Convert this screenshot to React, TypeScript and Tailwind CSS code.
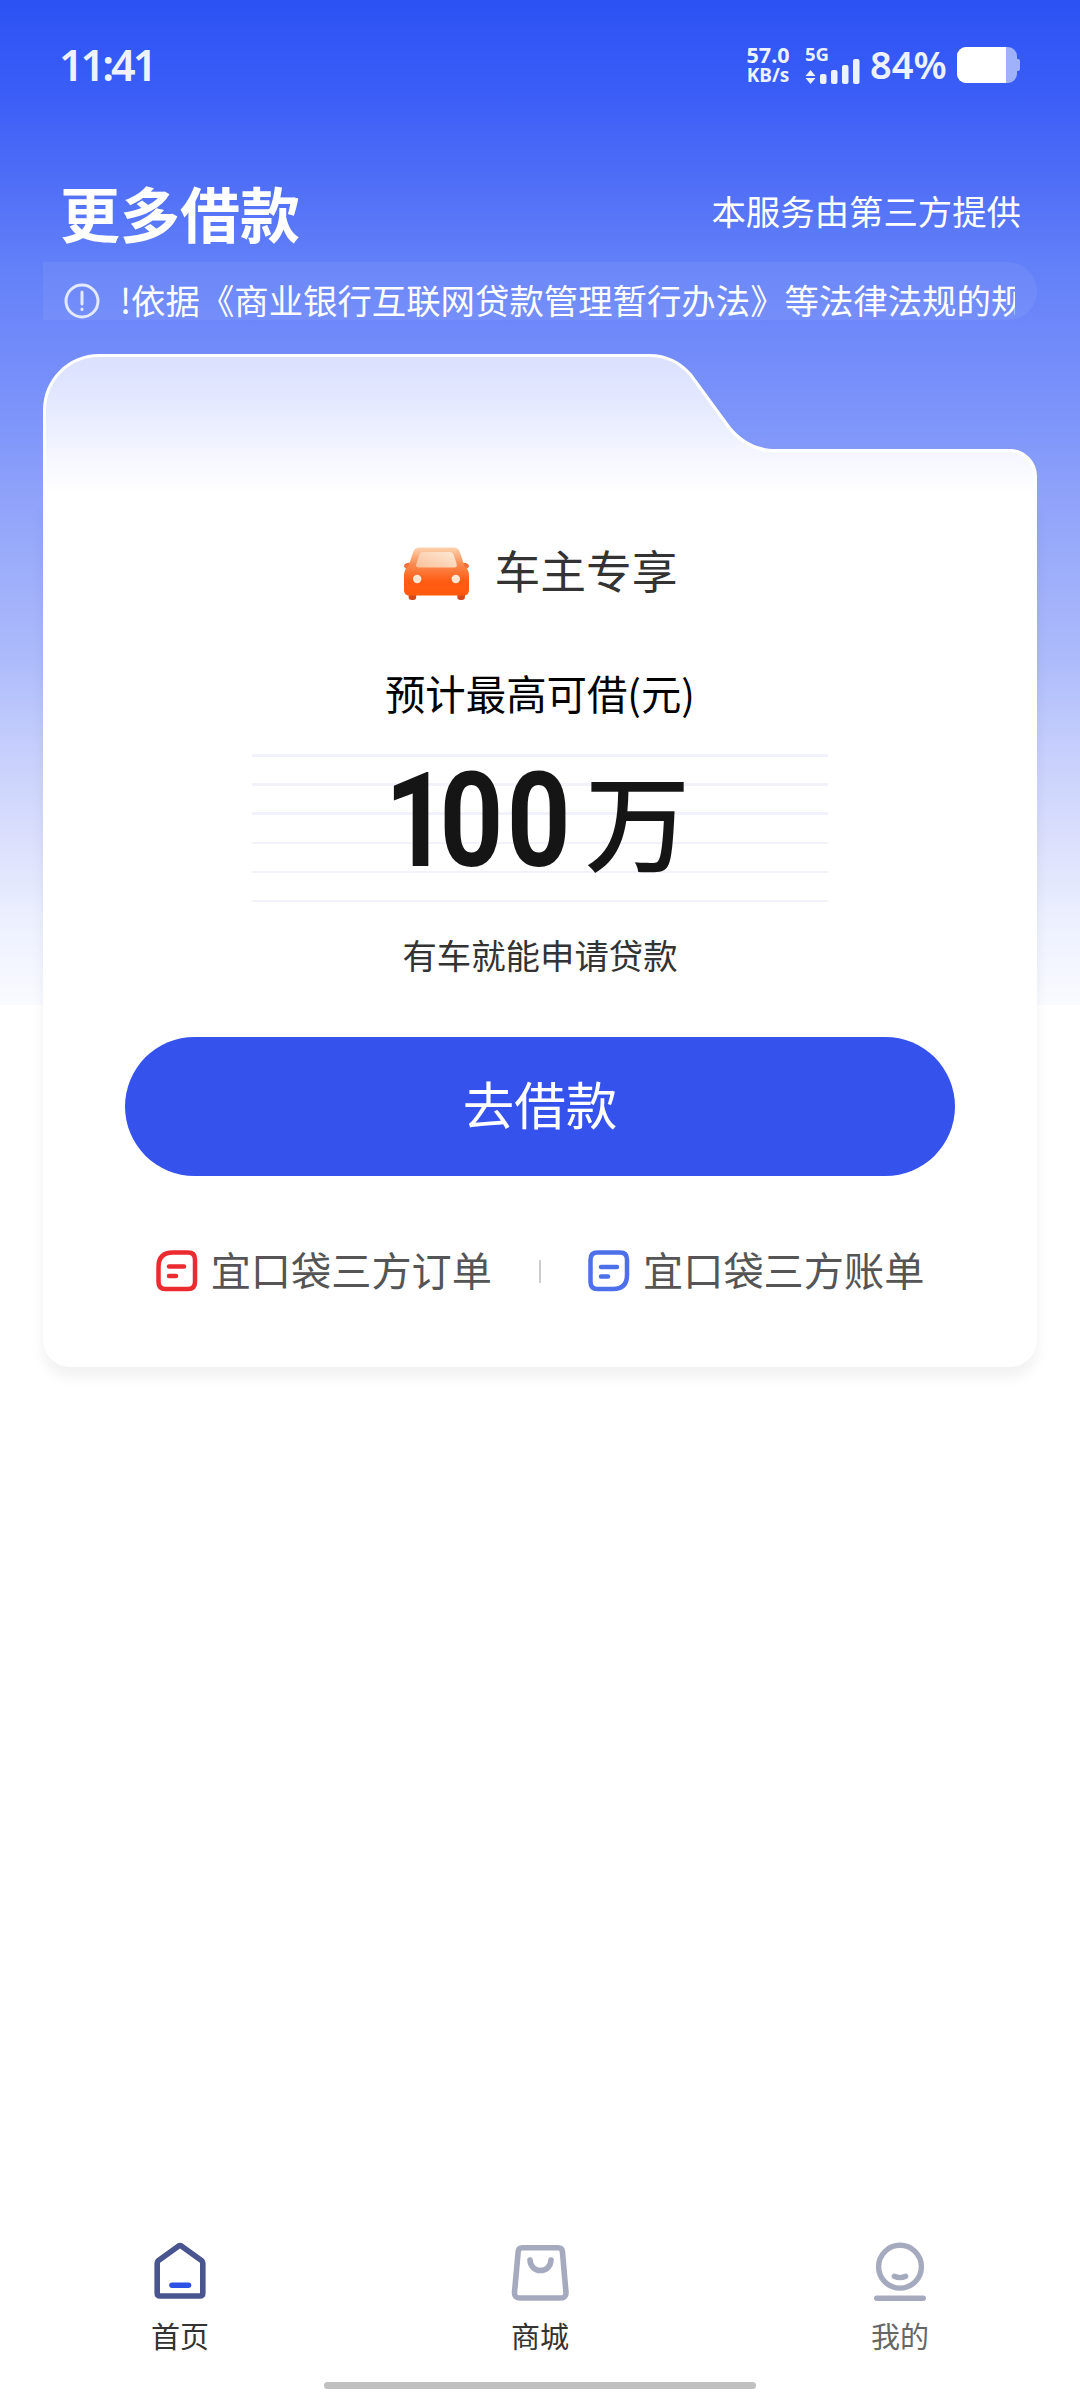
import type { ReactNode } from "react"

interface RecordLink {
  label: string
  icon: ReactNode
}

interface Tab {
  label: string
  icon: ReactNode
  className: string
}

function StatusBar() {
  return (
    <div className="flex h-[130px] items-center justify-between pl-[59px] pr-[60px] text-[#eef2ff]">
      <span className="mb-[2px] font-['Noto_Sans'] text-[43px] leading-none font-semibold tracking-[-3px]">11:41</span>
      <div className="flex items-center">
        <div className="mb-[1px] flex w-[46px] flex-col items-center gap-[1px] font-['Noto_Sans'] font-bold whitespace-nowrap">
          <span className="text-[21.5px] leading-[20px]">57.0</span>
          <span className="text-[19px] leading-[19px]">KB/s</span>
        </div>
        <div className="ml-[14px] flex w-[55px] flex-col">
          <span className="-mt-[3px] mb-[3px] font-['Noto_Sans'] text-[18.5px] leading-[19px] font-bold">5G</span>
          <svg viewBox="0 0 55 26" className="-mt-[8px] h-[26px] w-[55px]" fill="currentColor">
            <path d="M0.5 18 5.5 12l5 6zM0.5 20h10l-5 6z" />
            <rect x="15" y="16" width="6.5" height="10" rx="2" />
            <rect x="26" y="12" width="6.5" height="14" rx="2" />
            <rect x="37" y="7" width="6.5" height="19" rx="2" />
            <rect x="48" y="1" width="6.5" height="25" rx="2" />
          </svg>
        </div>
        <span className="mb-[3px] ml-[10px] w-[79px] font-['Noto_Sans'] text-[38px] leading-none font-semibold">84%</span>
        <svg viewBox="0 0 63 36" className="ml-[8px] h-[36px] w-[63px]">
          <path d="M9 0h42a9 9 0 0 1 9 9v3h1q2 0 2 2v8q0 2-2 2h-1v3a9 9 0 0 1-9 9H9a9 9 0 0 1-9-9V9a9 9 0 0 1 9-9z" fill="#a0b1fb" />
          <path d="M9 0h40v36H9a9 9 0 0 1-9-9V9a9 9 0 0 1 9-9z" fill="#fff" />
        </svg>
      </div>
    </div>
  )
}

function Notice() {
  return (
    <div className="ml-[43px] flex h-[58px] w-[994px] items-center rounded-r-[29px] bg-white/6 pt-[20px] pl-[21px] text-white">
      <svg viewBox="0 0 36 36" className="h-[36px] w-[36px] shrink-0" fill="none" stroke="#e3e9ff" strokeWidth="3" strokeLinecap="round">
        <circle cx="18" cy="18" r="16" />
        <path d="M18 9v12M18 26v0.5" />
      </svg>
      <p className="mb-[5px] ml-[20px] w-[895px] overflow-hidden text-[34.4px] leading-[38px] whitespace-nowrap">
        !依据《商业银行互联网贷款管理暂行办法》等法律法规的规定
      </p>
    </div>
  )
}

// Folder-shaped top edge of the card
function CardTop() {
  return (
    <svg viewBox="0 0 994 146" className="relative block h-[146px] w-full">
      <defs>
        <linearGradient id="tabFill" x1="0" y1="0" x2="0" y2="146" gradientUnits="userSpaceOnUse">
          <stop offset="0" stopColor="#dae0fe" />
          <stop offset="0.3" stopColor="#e3e8ff" />
          <stop offset="0.55" stopColor="#edf0ff" />
          <stop offset="0.72" stopColor="#f6f7ff" />
          <stop offset="0.97" stopColor="#ffffff" />
        </linearGradient>
      </defs>
      <path
        d="M0 146V56A56 56 0 0 1 56 0H606C624 0 638 7 649 20L687 72C699 87 714 95 733 95H967A27 27 0 0 1 994 122V146z"
        fill="#fff"
      />
      <path
        d="M3 146V56A53 53 0 0 1 56 3H606C623 3 636 9.500 646.500 22L684.500 74C697 90 713 98.500 733 98.500H967A24 24 0 0 1 991 122V146z"
        fill="url(#tabFill)"
      />
    </svg>
  )
}

function CarIcon() {
  return (
    <svg viewBox="0 0 64 53" className="h-[53px] w-[65px]" preserveAspectRatio="none">
      <defs>
        <linearGradient id="carBody" x1="0" y1="0" x2="0" y2="1">
          <stop offset="0" stopColor="#fdd3b0" />
          <stop offset="0.35" stopColor="#f98b50" />
          <stop offset="0.7" stopColor="#ff5c14" />
          <stop offset="1" stopColor="#ff5a0c" />
        </linearGradient>
        <linearGradient id="carGlass" x1="1" y1="0" x2="0" y2="1">
          <stop offset="0" stopColor="#fde9d5" />
          <stop offset="1" stopColor="#fbc19c" />
        </linearGradient>
      </defs>
      <rect x="4.500" y="44" width="7.500" height="9" rx="3" fill="#d5481c" />
      <rect x="52.500" y="44" width="7.500" height="9" rx="3" fill="#d5481c" />
      <ellipse cx="5" cy="19" rx="5" ry="3.200" fill="#f4703a" />
      <ellipse cx="59" cy="19" rx="5" ry="3.200" fill="#f4703a" />
      <path
        d="M15 0.500H49Q53.500 0.500 55 5L59.500 19Q64 22 64 29V43Q64 48.500 58.500 48.500H5.500Q0 48.500 0 43V29Q0 22 4.500 19L9 5Q10.500 0.500 15 0.500z"
        fill="url(#carBody)"
      />
      <path d="M19 5H45Q48 5 49 8L52 17.500Q52.500 20.500 49.500 20.500H14.500Q11.500 20.500 12 17.500L15 8Q16 5 19 5z" fill="url(#carGlass)" />
      <circle cx="13" cy="32" r="4.200" fill="#ffe6d2" />
      <circle cx="51" cy="32" r="4.200" fill="#ffe6d2" />
    </svg>
  )
}

function OrderIcon() {
  return (
    <svg viewBox="0 0 42 42" className="h-[42px] w-[42px]" fill="none" stroke="#ec2b30" strokeWidth="4.5" strokeLinecap="round">
      <path d="M17 2.500H32Q39 2.500 39 9.500V32Q39 39 32 39H9.500Q2.500 39 2.500 32V17Q2.500 2.500 17 2.500z" />
      <path d="M13 16.500H28M13 26H20" />
    </svg>
  )
}

function BillIcon() {
  return (
    <svg viewBox="0 0 42 42" className="h-[42px] w-[42px]" fill="none" stroke="#4d70ea" strokeWidth="4.5" strokeLinecap="round">
      <path d="M9.500 2.500H32Q39 2.500 39 9.500V25Q39 39 25 39H9.500Q2.500 39 2.500 32V9.500Q2.500 2.500 9.500 2.500z" />
      <path d="M13 17H29M13 26.500H20" />
    </svg>
  )
}

const recordLinks: RecordLink[] = [
  { label: "宜口袋三方订单", icon: <OrderIcon /> },
  { label: "宜口袋三方账单", icon: <BillIcon /> },
]

const tabs: Tab[] = [
  {
    label: "首页",
    className: "text-[#333333]",
    icon: (
      <svg viewBox="0 0 60 60" className="h-[60px] w-[60px]" fill="none" strokeLinecap="round" strokeLinejoin="round">
        <path d="M28.700 5Q30 4.200 31.300 5L51.500 19.500Q52.800 20.500 52.800 22V52Q52.800 55 49.800 55H10.200Q7.200 55 7.200 52V22Q7.200 20.500 8.500 19.500z" stroke="#48558f" strokeWidth="5.600" />
        <path d="M22 44.300H38.500" stroke="#2c51e6" strokeWidth="5.600" />
      </svg>
    ),
  },
  {
    label: "商城",
    className: "text-[#333333]",
    icon: (
      <svg viewBox="0 0 60 60" className="h-[60px] w-[60px]" fill="none" stroke="#a6aabf" strokeWidth="5.600" strokeLinecap="round">
        <path d="M12.500 6.700H48Q52 6.700 52.400 10.500L56 51.500Q56.200 57 50.500 57H10Q4.200 57 4.500 51.500L8.200 10.500Q8.600 6.700 12.500 6.700z" />
        <path d="M20 19C20.500 33 40.500 33 41 19" />
      </svg>
    ),
  },
  {
    label: "我的",
    className: "text-[#666666]",
    icon: (
      <svg viewBox="0 0 60 60" className="h-[60px] w-[60px]" fill="none" stroke="#a6aabf" strokeWidth="5.400" strokeLinecap="round">
        <circle cx="30" cy="25.700" r="21.400" />
        <path d="M24.300 35.300Q30 38 35.700 35.300M6.700 57.300H53.300" />
      </svg>
    ),
  },
]

export default function App() {
  return (
    <div className="flex h-[2392px] w-[1080px] flex-col overflow-hidden bg-[linear-gradient(180deg,#2c52f4_0px,#3a5df7_90px,#5170f7_190px,#6280f8_265px,#7089fa_335px,#7f96fa_430px,#90a3fa_500px,#adbbfb_660px,#c6cffc_750px,#dde1fd_850px,#eef2ff_930px,#fafbff_1005px,#ffffff_1005px)] font-['Noto_Sans_CJK_SC',sans-serif]">
      <StatusBar />

      <header className="flex h-[132px] items-center justify-between pt-[31px] pr-[59px] pl-[60px] text-white">
        <h1 className="text-[60px] leading-none font-bold">更多借款</h1>
        <span className="mb-[3px] text-[34.4px] leading-none">本服务由第三方提供</span>
      </header>

      <Notice />

      <main className="mx-[43px] mt-[34px]">
        <CardTop />
        <section className="flex h-[867px] flex-col items-center rounded-b-[27px] bg-white shadow-[0_10px_14px_rgba(0,0,0,0.06)]">
          <div className="mt-[43px] ml-[2px] flex h-[60px] items-center">
            <CarIcon />
            <h2 className="mb-[8px] ml-[25px] text-[45.8px] leading-[52px] text-[#333333]">车主专享</h2>
          </div>
          <p className="mt-[62px] text-[40.4px] leading-[56px] text-black">预计最高可借(元)</p>

          <div className="mt-[33px] flex h-[149px] w-[576px] items-start bg-[repeating-linear-gradient(180deg,#f2f2fa_0px,#f2f2fa_2.500px,transparent_2.500px,transparent_29.200px)] text-[#151515]">
            <span className="w-[322px] origin-right scale-x-[0.85] text-right font-['Roboto'] text-[131px] leading-[134px] font-bold tracking-[4px]">
              <span className="-mr-[15px]">1</span>00
            </span>
            <span className="ml-[11px] text-[105px] leading-[127px] font-medium">万</span>
          </div>

          <p className="mt-[26px] text-[34.4px] leading-[50px] text-[#333333]">有车就能申请贷款</p>

          <button className="mt-[58px] h-[139px] w-[830px] rounded-full bg-[#3552ec] pb-[8px] text-[51.5px] text-white">
            去借款
          </button>

          <div className="mt-[67px] flex h-[56px] items-center text-[40.2px] text-[#555555]">
            <button className="flex items-center gap-[13px]">
              {recordLinks[0].icon}
              <span className="mb-[4px]">{recordLinks[0].label}</span>
            </button>
            <span className="mx-[47px] h-[23px] w-[2px] bg-[#cccccc]" />
            <button className="flex items-center gap-[13px]">
              {recordLinks[1].icon}
              <span className="mb-[4px]">{recordLinks[1].label}</span>
            </button>
          </div>
        </section>
      </main>

      <footer className="mt-auto">
        <nav className="grid grid-cols-3">
          {tabs.map((tab) => (
            <button key={tab.label} className={`flex flex-col items-center ${tab.className}`}>
              {tab.icon}
              <span className="mt-[12px] text-[29px] leading-[44px]">{tab.label}</span>
            </button>
          ))}
        </nav>
        <div className="mx-auto mt-[25px] mb-[3px] h-[7px] w-[432px] rounded-full bg-[#c0c0c0]" />
      </footer>
    </div>
  )
}
